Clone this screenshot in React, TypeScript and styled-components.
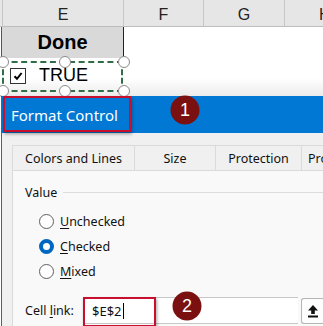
import React from "react";
import styled, { createGlobalStyle } from "styled-components";

const Global = createGlobalStyle`
  html, body {
    margin: 0;
    padding: 0;
    width: 323px;
    height: 326px;
    overflow: hidden;
    background: #ffffff;
  }
`;

const Page = styled.div`
  width: 323px;
  height: 326px;
  overflow: hidden;
  display: flex;
  flex-direction: column;
`;

const Sheet = styled.div`
  height: 96px;
  display: flex;
  flex-direction: column;
  background: linear-gradient(#ffffff 0, #ffffff 78px, #ececec 96px);
`;

const HeaderRow = styled.div`
  height: 27px;
  display: grid;
  grid-template-columns: 2px 121px 80px 81px 1fr;
  background: #e6e6e6;
  border-bottom: 1px solid #bdbdbd;
  box-sizing: border-box;
`;

const ColHead = styled.div<{ $left?: boolean }>`
  display: flex;
  align-items: center;
  justify-content: ${(p) => (p.$left ? "flex-start" : "center")};
  padding-left: ${(p) => (p.$left ? "34px" : "0")};
  font-family: "Liberation Sans", Arial, sans-serif;
  font-size: 16px;
  color: #222;
  border-left: 1px solid #c6c6c6;
  padding-top: 3px;
`;

const Row = styled.div`
  height: 31px;
  display: flex;
  position: relative;
`;

const DoneCell = styled.div`
  width: 121px;
  margin-left: 1px;
  background: #d9d9d9;
  border-left: 1px solid #555;
  border-right: 1px solid #222;
  display: flex;
  align-items: center;
  justify-content: center;
  font-family: "Liberation Sans", Arial, sans-serif;
  font-weight: bold;
  font-size: 20px;
  color: #000;
`;

const CheckCell = styled.div`
  width: 121px;
  margin-left: 2px;
  display: flex;
  align-items: center;
  gap: 13px;
  padding-left: 8px;
  box-sizing: border-box;
  font-family: "Liberation Sans", Arial, sans-serif;
  font-size: 18px;
  color: #000;
  padding-top: 4px;
`;

const Box = styled.div`
  width: 14px;
  height: 14px;
  border: 1px solid #333;
  background: #fff;
  display: flex;
  align-items: center;
  justify-content: center;
`;

const Selection = styled.div`
  position: absolute;
  left: 2px;
  top: 3px;
  width: 121px;
  height: 31px;
  border: 2px dashed #2f6e46;
  box-sizing: border-box;
`;

const Handle = styled.div<{ $x: number; $y: number }>`
  position: absolute;
  left: ${(p) => p.$x}px;
  top: ${(p) => p.$y}px;
  width: 12px;
  height: 12px;
  border-radius: 50%;
  border: 1.5px solid #8a8a8a;
  background: #fff;
  box-sizing: border-box;
  transform: translate(-50%, -50%);
`;

const Dialog = styled.div`
  flex: 1;
  display: flex;
  flex-direction: column;
  margin-left: 1px;
  border-left: 1px solid #0078d4;
  background: #f0f0f0;
  font-family: "Noto Sans", "Segoe UI", sans-serif;
  position: relative;
`;

const TitleBar = styled.div`
  height: 37px;
  background: #0078d4;
  display: flex;
  align-items: center;
  padding-left: 9px;
  color: #fff;
  font-size: 15px;
`;

const Mark = styled.div<{ $x: number; $y: number; $w: number; $h: number }>`
  position: absolute;
  left: ${(p) => p.$x}px;
  top: ${(p) => p.$y}px;
  width: ${(p) => p.$w}px;
  height: ${(p) => p.$h}px;
  border: 2px solid #c8102e;
  box-sizing: border-box;
  box-shadow: 1px 2px 3px rgba(0, 0, 0, 0.35);
`;

const Badge = styled.div<{ $x: number; $y: number }>`
  position: absolute;
  left: ${(p) => p.$x}px;
  top: ${(p) => p.$y}px;
  width: 29px;
  height: 29px;
  border-radius: 50%;
  background: #7b1010;
  color: #fff;
  font-family: "Liberation Sans", Arial, sans-serif;
  font-size: 18px;
  display: flex;
  align-items: center;
  justify-content: center;
  transform: translate(-50%, -50%);
`;

const Body = styled.div`
  flex: 1;
  padding: 12px 0 0 10px;
  display: flex;
  flex-direction: column;
`;

const Tabs = styled.div`
  display: flex;
  height: 25px;
`;

const Tab = styled.div<{ $w: number; $left?: boolean }>`
  width: ${(p) => p.$w}px;
  flex-shrink: 0;
  display: flex;
  align-items: center;
  justify-content: ${(p) => (p.$left ? "flex-start" : "center")};
  padding-left: ${(p) => (p.$left ? "6px" : "0")};
  font-size: 12.5px;
  color: #111;
  border: 1px solid #dadada;
  border-bottom: none;
  margin-right: -1px;
  box-sizing: border-box;
  background: #f0f0f0;
  white-space: nowrap;
  overflow: hidden;
`;

const Panel = styled.div`
  flex: 1;
  background: #f9f9f9;
  border-left: 1px solid #dadada;
  border-top: 1px solid #dadada;
  padding: 13px 0 0 12px;
  display: flex;
  flex-direction: column;
`;

const GroupTitle = styled.div`
  display: flex;
  align-items: center;
  gap: 6px;
  font-size: 12.5px;
  color: #111;
  &::after {
    content: "";
    flex: 1;
    height: 1px;
    background: #dcdcdc;
  }
`;

const Radios = styled.div`
  display: flex;
  flex-direction: column;
  gap: 5px;
  padding: 10px 0 0 14px;
`;

const RadioRow = styled.label`
  display: flex;
  align-items: center;
  gap: 6px;
  height: 20px;
  font-size: 12.5px;
  color: #111;
  u {
    text-decoration: underline;
    text-underline-offset: 2px;
  }
`;

const Dot = styled.span<{ $on?: boolean }>`
  width: 15px;
  height: 15px;
  border-radius: 50%;
  box-sizing: border-box;
  border: ${(p) => (p.$on ? "4.5px solid #0067c0" : "1px solid #5f5f5f")};
  background: #fff;
`;

const LinkRow = styled.div`
  display: flex;
  align-items: center;
  margin-top: 16px;
  height: 27px;
  font-size: 12.5px;
  color: #111;
`;

const LinkLabel = styled.span`
  width: 59px;
  u {
    text-decoration: underline;
    text-underline-offset: 2px;
  }
`;

const Input = styled.div`
  flex: 1;
  height: 27px;
  display: flex;
  align-items: center;
  background: #fff;
  border: 1px solid #c8c8c8;
  border-right: none;
  padding-left: 7px;
  box-sizing: border-box;
  font-size: 13px;
`;

const Caret = styled.span`
  width: 1px;
  height: 16px;
  background: #000;
  margin-left: 1px;
`;

const UpButton = styled.div`
  width: 22px;
  height: 26px;
  margin-left: 3px;
  border: 1px solid #b5b5b5;
  border-right: none;
  border-radius: 3px 0 0 3px;
  background: #fdfdfd;
  display: flex;
  align-items: center;
  justify-content: center;
  box-sizing: border-box;
`;

export default function App() {
  return (
    <Page>
      <Global />
      <Sheet>
        <HeaderRow>
          <span />
          <ColHead>E</ColHead>
          <ColHead>F</ColHead>
          <ColHead>G</ColHead>
          <ColHead $left>H</ColHead>
        </HeaderRow>
        <Row>
          <DoneCell>Done</DoneCell>
        </Row>
        <Row>
          <CheckCell>
            <Box>
              <svg width="10" height="10" viewBox="0 0 10 10">
                <path d="M1.5 5.2 L4 7.8 L8.6 2" fill="none" stroke="#000" strokeWidth="2" />
              </svg>
            </Box>
            TRUE
          </CheckCell>
          <Selection />
          <Handle $x={3} $y={4} />
          <Handle $x={65} $y={4} />
          <Handle $x={124} $y={4} />
          <Handle $x={3} $y={33} />
          <Handle $x={65} $y={33} />
          <Handle $x={124} $y={33} />
        </Row>
      </Sheet>
      <Dialog>
        <TitleBar>Format Control</TitleBar>
        <Body>
          <Tabs>
            <Tab $w={123}>Colors and Lines</Tab>
            <Tab $w={82}>Size</Tab>
            <Tab $w={87}>Protection</Tab>
            <Tab $w={60} $left>Properties</Tab>
          </Tabs>
          <Panel>
            <GroupTitle>Value</GroupTitle>
            <Radios>
              <RadioRow>
                <Dot />
                <span><u>U</u>nchecked</span>
              </RadioRow>
              <RadioRow>
                <Dot $on />
                <span><u>C</u>hecked</span>
              </RadioRow>
              <RadioRow>
                <Dot />
                <span><u>M</u>ixed</span>
              </RadioRow>
            </Radios>
            <LinkRow>
              <LinkLabel>Cell <u>l</u>ink:</LinkLabel>
              <Input>
                $E$2
                <Caret />
              </Input>
              <UpButton>
                <svg width="12" height="14" viewBox="0 0 12 14">
                  <path d="M6 1 L11 6.5 H7.8 V10 H4.2 V6.5 H1 Z" fill="#111" />
                  <rect x="1" y="11.5" width="10" height="2" fill="#111" />
                </svg>
              </UpButton>
            </LinkRow>
          </Panel>
        </Body>
        <Mark $x={1} $y={0} $w={128} $h={36} />
        <Badge $x={183} $y={14}>1</Badge>
        <Mark $x={81} $y={201} $w={73} $h={30} />
        <Badge $x={185} $y={210}>2</Badge>
      </Dialog>
    </Page>
  );
}
